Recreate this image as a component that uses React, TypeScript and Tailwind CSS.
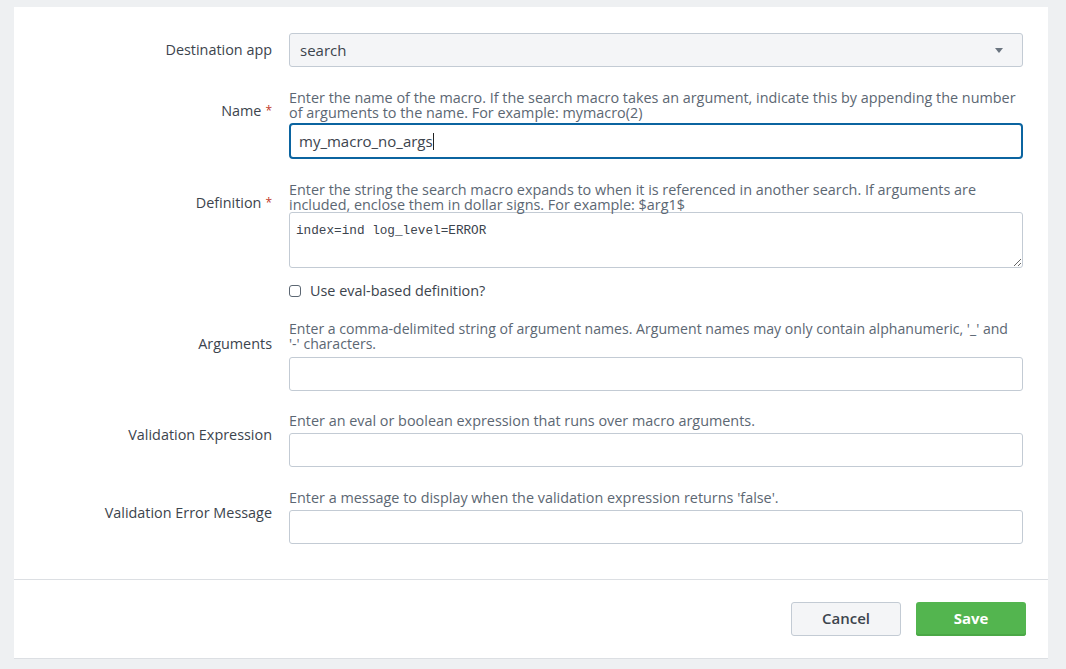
import React from 'react';

const labelCls = 'text-right text-[14.4px] leading-[16px] text-[#3c444d]';
const helpCls = 'text-[14.4px] leading-[15px] text-[#5c6773]';
const inputCls = 'block w-full h-[34px] px-[10px] bg-white border border-[#c3cbd4] rounded-[3px] text-[15px] text-[#3c444d] outline-none';

const Required = () => <span className="text-[#c0392b] ml-[4px] text-[12px] align-top">*</span>;

export default function App() {
  return (
    <div className="min-h-screen bg-[#eef0f2] pt-[7px] pl-[14px] pr-[18px] pb-[10px]" style={{ fontFamily: '"Open Sans", "Liberation Sans", sans-serif' }}>
      <div className="bg-white border-b border-[#dcdfe3]">
        <div className="grid grid-cols-[258px_1fr] gap-x-[17px] pr-[25px] pt-[26px] pb-[35px]">
          {/* Destination app */}
          <div className="text-right text-[14.4px] text-[#3c444d] self-center">Destination app</div>
          <div className="h-[34px] flex items-center justify-between px-[10px] bg-[#f4f5f7] border border-[#c3cbd4] rounded-[3px] text-[15px] text-[#3c444d]">
            <span>search</span>
            <svg width="8" height="5" viewBox="0 0 8 5" className="mr-[9px]"><path d="M0 0h8L4 5z" fill="#6b7580" /></svg>
          </div>

          {/* Name */}
          <div className={labelCls + ' mt-[23px] pt-[13px]'}>Name<Required /></div>
          <div className="mt-[23px]">
            <div className={helpCls + ' mb-[3px]'}>Enter the name of the macro. If the search macro takes an argument, indicate this by appending the number of arguments to the name. For example: mymacro(2)</div>
            <div className="h-[36px] flex items-center px-[8px] border-2 border-[#0b64a0] rounded-[4px] text-[15px] text-[#3c444d]">
              <span>my_macro_no_args</span>
              <span className="inline-block w-px h-[17px] bg-[#222]" />
            </div>
          </div>

          {/* Definition */}
          <div className={labelCls + ' mt-[23px] pt-[13px]'}>Definition<Required /></div>
          <div className="mt-[23px]">
            <div className={helpCls}>Enter the string the search macro expands to when it is referenced in another search. If arguments are included, enclose them in dollar signs. For example: $arg1$</div>
            <textarea
              readOnly
              value="index=ind log_level=ERROR"
              className="block w-full h-[56px] px-[6px] pt-[10px] pb-[8px] border border-[#c3cbd4] rounded-[3px] text-[12.7px] leading-[16px] text-[#3c444d] outline-none resize-y"
              style={{ fontFamily: '"Liberation Mono", monospace' }}
            />
            <label className="flex items-center gap-[9px] mt-[12px] text-[14.4px] text-[#3c444d]">
              <span className="w-[12px] h-[12px] border border-[#5c6773] rounded-[3px] bg-white" />
              Use eval-based definition?
            </label>
          </div>

          {/* Arguments */}
          <div className={labelCls + ' mt-[19px] pt-[15px]'}>Arguments</div>
          <div className="mt-[19px]">
            <div className="max-w-[725px] text-[14.1px] leading-[15px] text-[#5c6773] mb-[6px]">Enter a comma-delimited string of argument names. Argument names may only contain alphanumeric, '_' and '-' characters.</div>
            <input className={inputCls} />
          </div>

          {/* Validation Expression */}
          <div className={labelCls + ' mt-[22px] pt-[14px]'}>Validation Expression</div>
          <div className="mt-[22px]">
            <div className={helpCls + ' mb-[5px]'}>Enter an eval or boolean expression that runs over macro arguments.</div>
            <input className={inputCls} />
          </div>

          {/* Validation Error Message */}
          <div className={labelCls + ' mt-[23px] pt-[15px]'}>Validation Error Message</div>
          <div className="mt-[23px]">
            <div className={helpCls + ' mb-[5px]'}>Enter a message to display when the validation expression returns 'false'.</div>
            <input className={inputCls} />
          </div>
        </div>

        <div className="border-t border-[#dcdfe3] flex justify-end gap-[15px] pt-[22px] pb-[22px] pr-[22px]">
          <button className="w-[110px] h-[34px] bg-[#f4f5f7] border border-[#c3cbd4] rounded-[3px] text-[15px] font-semibold text-[#3c444d]">Cancel</button>
          <button className="w-[110px] h-[34px] bg-[#53b54f] rounded-[3px] text-[15px] font-bold text-white shadow-[inset_0_-2px_0_#4aa846]">Save</button>
        </div>
      </div>
    </div>
  );
}
